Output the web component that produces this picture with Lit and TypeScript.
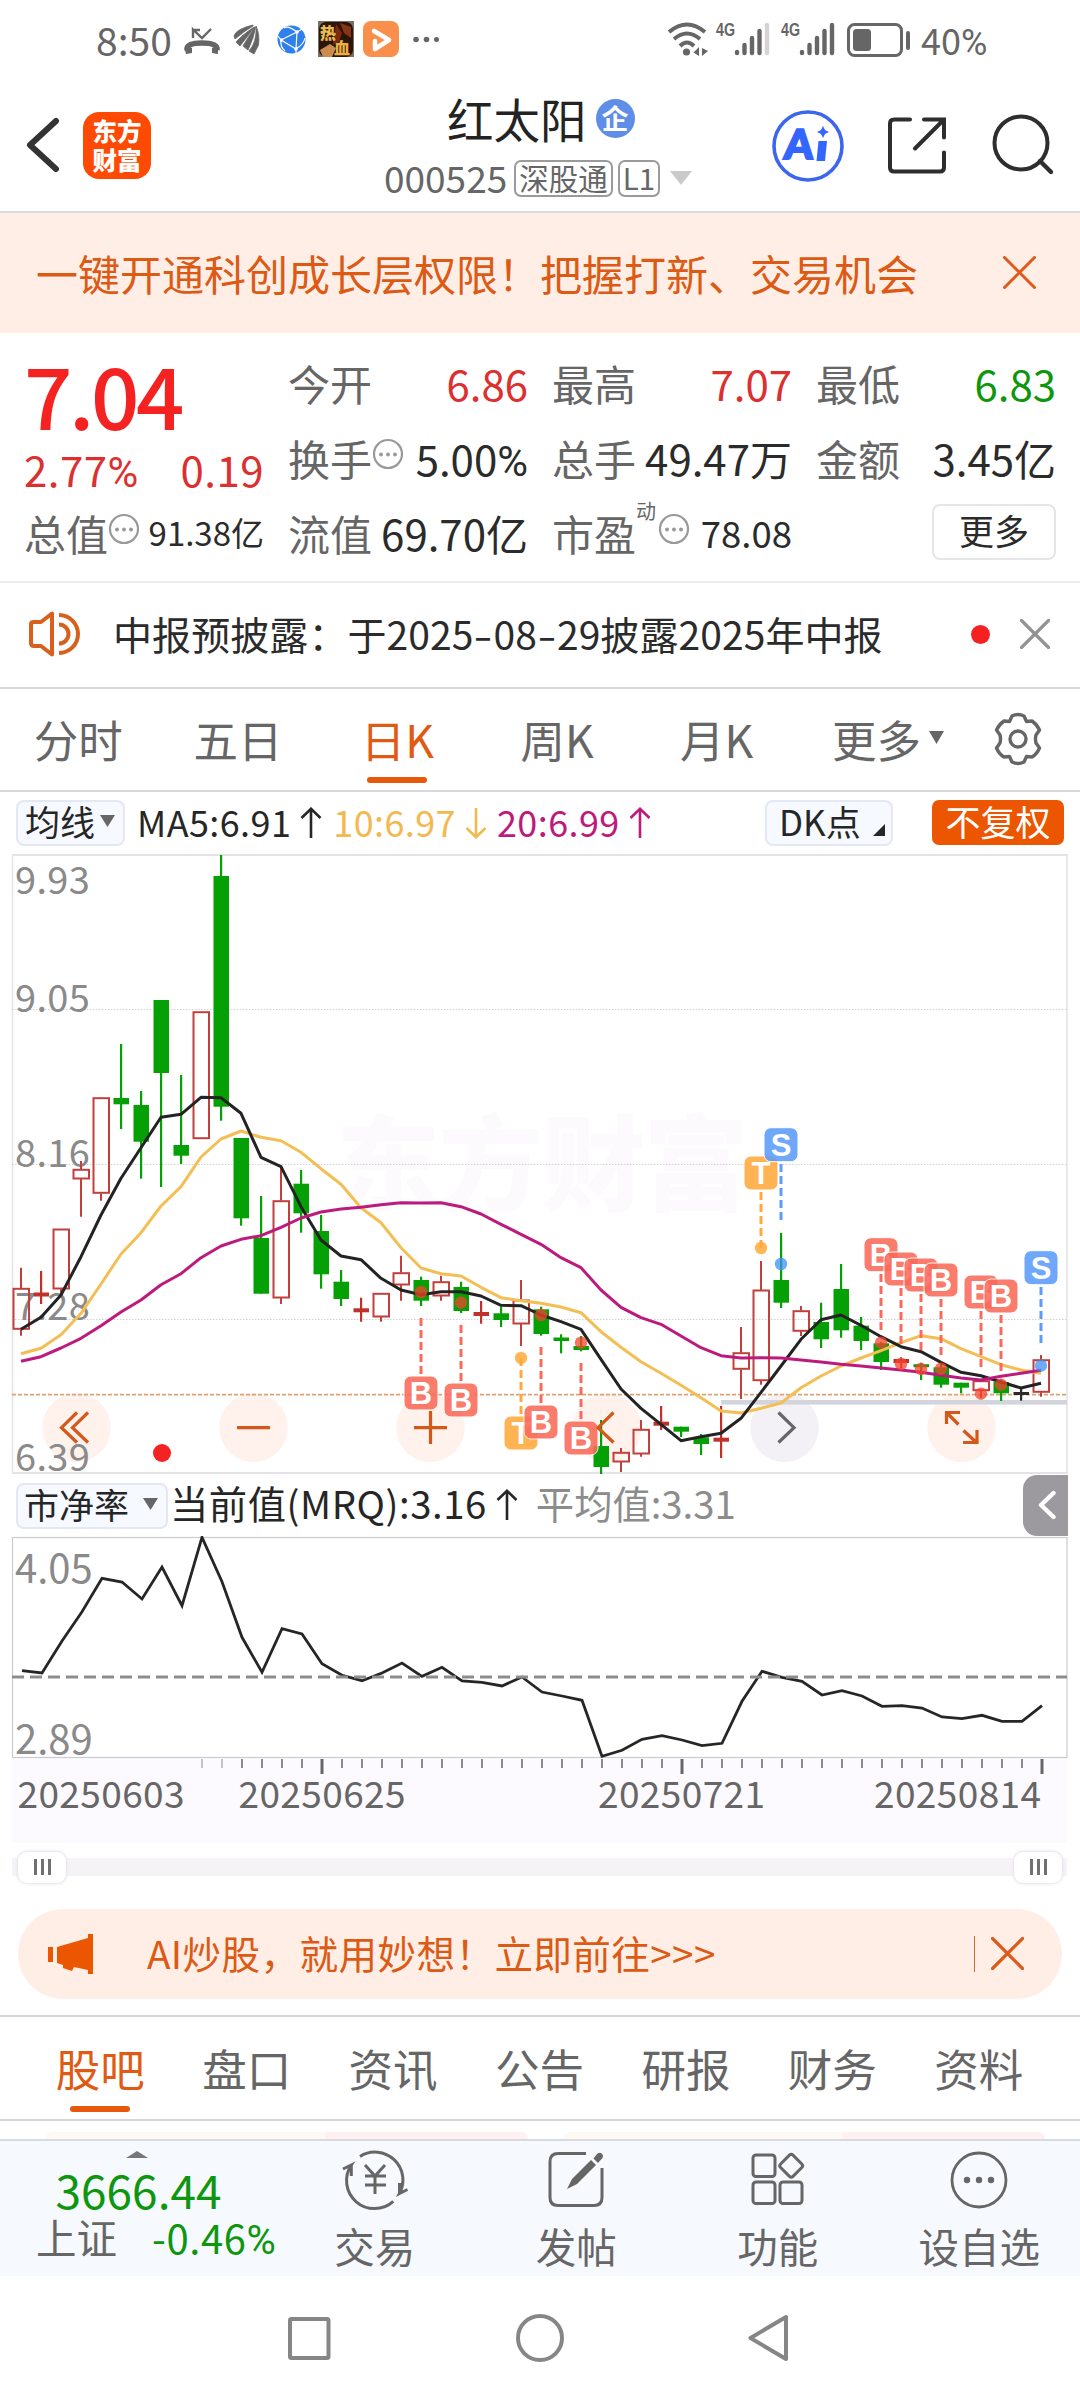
import { LitElement, html, svg, css } from "lit";
import { customElement } from "lit/decorators.js";

const FONT = css`
  :host {
    font-family: "Noto Sans CJK SC", "Noto Sans", sans-serif;
    color: #2b2b2b;
  }
  svg {
    display: block;
    flex: none;
  }
  * {
    box-sizing: border-box;
  }
`;

type Candle = [kind: string, high: number, top: number, bottom: number, low: number];

// r: hollow rise, g: solid fall, x: red doji, y: green doji, k: flat doji
const CANDLES: Candle[] = [
  ["r", 1267.7, 1288.3, 1329.3, 1335.7],
  ["x", 1271, 1292.5, 1296.5, 1304],
  ["r", 1229, 1229, 1289, 1293],
  ["r", 1161, 1169.3, 1179, 1216.7],
  ["r", 1097.7, 1097.7, 1193.3, 1200.7],
  ["g", 1044, 1098, 1104.3, 1129],
  ["g", 1091, 1105, 1141.7, 1178.7],
  ["g", 1000, 1000, 1073, 1187],
  ["g", 1075, 1145, 1155.7, 1164],
  ["r", 1011.7, 1011.7, 1138.7, 1138.7],
  ["g", 855, 876, 1106.7, 1120.7],
  ["g", 1138, 1138, 1218.3, 1225.7],
  ["g", 1196, 1238, 1293.7, 1293.7],
  ["r", 1166, 1200.7, 1298, 1304],
  ["g", 1170, 1183.7, 1213.3, 1232.7],
  ["g", 1215, 1231, 1274.3, 1288.7],
  ["g", 1270, 1281.7, 1299, 1306],
  ["x", 1297.7, 1308.3, 1312.3, 1321.7],
  ["r", 1293.3, 1293.3, 1317, 1321.7],
  ["r", 1255.7, 1272.7, 1285, 1300.7],
  ["g", 1276.7, 1280, 1300.7, 1306],
  ["r", 1275.7, 1281.7, 1296, 1300.7],
  ["g", 1281.7, 1287, 1311, 1313],
  ["x", 1301, 1312, 1316, 1323.7],
  ["g", 1306.7, 1313.3, 1320, 1327],
  ["r", 1280, 1300, 1324, 1346],
  ["g", 1306.7, 1309.3, 1334, 1335.7],
  ["y", 1334.3, 1337.5, 1341, 1353.3],
  ["y", 1336, 1346, 1350, 1351.3],
  ["g", 1420, 1446, 1467, 1474],
  ["r", 1448, 1452.3, 1462, 1472],
  ["r", 1420, 1429.3, 1454, 1456.7],
  ["x", 1406, 1421.7, 1425.7, 1430],
  ["g", 1426.7, 1426.7, 1431.7, 1437],
  ["g", 1434, 1437.3, 1444, 1455],
  ["x", 1406, 1437.7, 1441.7, 1458],
  ["r", 1327, 1352.7, 1369.3, 1399],
  ["r", 1261, 1290, 1380.7, 1384.7],
  ["g", 1233, 1280, 1302.7, 1308],
  ["r", 1306, 1310.7, 1331.3, 1336],
  ["g", 1302.7, 1322, 1339.3, 1348],
  ["g", 1264, 1289, 1330.3, 1337.7],
  ["g", 1317, 1325.7, 1341, 1350],
  ["g", 1342, 1343.3, 1362, 1370],
  ["x", 1357.3, 1359, 1363, 1368],
  ["y", 1362.7, 1364.2, 1367.2, 1380],
  ["g", 1362.7, 1367.3, 1384.7, 1387.7],
  ["g", 1382.7, 1382.7, 1387.7, 1393.3],
  ["r", 1380.7, 1380.7, 1390.7, 1398],
  ["g", 1379.3, 1382, 1393.3, 1401],
  ["k", 1387.3, 1392, 1395, 1400.7],
  ["r", 1355, 1359.7, 1392.3, 1396.7],
];

const MA5 = [748, 712, 645, 530, 405, 295, 203, 112, 103, 52, 53, 100, 232, 260, 380, 480, 528, 539, 595, 630, 644, 635, 635, 648, 676, 677, 705, 725, 748, 838, 927, 985, 1033, 1082, 1070, 1060, 1015, 937, 858, 778, 719, 705, 736, 770, 800, 815, 847, 877, 887, 906, 924, 910];
const MA10 = [821, 805, 764, 700, 612, 522, 458, 378, 320, 231, 177, 153, 172, 182, 217, 266, 313, 383, 428, 503, 564, 581, 588, 622, 653, 662, 670, 681, 698, 755, 802, 845, 880, 916, 953, 993, 999, 985, 969, 923, 888, 858, 834, 812, 788, 767, 776, 806, 830, 854, 870, 880];
const MA20 = [844, 830, 804, 775, 737, 696, 660, 614, 581, 533, 498, 478, 467, 442, 414, 396, 387, 382, 374, 368, 369, 368, 380, 402, 433, 463, 493, 533, 563, 630, 682, 713, 733, 768, 803, 827, 834, 833, 834, 840, 846, 853, 858, 864, 870, 877, 886, 894, 900, 889, 880, 871];
const PB = [632, 639, 543, 455, 355, 366, 417, 321, 437, 232, 365, 532, 637, 506, 522, 611, 646, 662, 639, 609, 649, 622, 663, 667, 678, 651, 696, 708, 721, 889, 871, 838, 827, 840, 857, 850, 724, 634, 652, 664, 705, 692, 708, 739, 737, 744, 771, 776, 766, 784, 784, 737];

const path = (values: number[], base: number, x0: number) =>
  values.map((v, i) => `${x0 + 20 * i},${(base + v / 3).toFixed(1)}`).join(" ");

// letter, slot, badge centre y, dash start, dash end, dot y
const MARKS: [string, number, number, number, number, number][] = [
  ["B", 20, 1393, 1318, 1375, 1292],
  ["B", 22, 1400, 1325, 1382, 1302.7],
  ["T", 25, 1433, 1358, 1415, 1358],
  ["B", 26, 1422, 1347, 1404, 1315],
  ["B", 28, 1438, 1363, 1420, 1342.7],
  ["T", 37, 1173, 1192, 1248, 1248],
  ["S", 38, 1144.7, 1164, 1220, 1264],
  ["B", 43, 1254.7, 1274, 1330, 1342.7],
  ["B", 44, 1269, 1288, 1344, 1364],
  ["B", 45, 1275, 1294, 1350, 1369],
  ["B", 46, 1280, 1299, 1355, 1368.7],
  ["B", 48, 1292, 1311, 1367, 1393.7],
  ["B", 49, 1296, 1315, 1371, 1384.7],
  ["S", 51, 1267.7, 1287, 1343, 1365.7],
];
const MARK_FILL: Record<string, string> = { B: "#f96a5a", T: "#ffa93c", S: "#5c9dfa" };
const DOT_FILL: Record<string, string> = { B: "#f5432c", T: "#ff9f1f", S: "#3d8ff5" };

@customElement("k-line-chart")
export class KLineChart extends LitElement {
  static styles = [
    FONT,
    css`
      :host {
        display: block;
      }
      .axis {
        font-size: 38px;
        fill: #8a8a8a;
        letter-spacing: 0.3px;
      }
      .mark {
        font: bold 31px "Liberation Sans", sans-serif;
        fill: #fff;
      }
      .water {
        font-size: 104px;
        font-weight: 900;
        fill: #fdfafe;
      }
    `,
  ];

  private candle([kind, high, top, bottom, low]: Candle, i: number) {
    const x = 21 + 20 * i;
    if (kind === "r") {
      return svg`<g stroke="#c2403c" stroke-width="2" fill="none">
        <path d="M${x} ${high}V${top}M${x} ${bottom}V${low}"/>
        <rect x=${x - 7.5} y=${top + 0.5} width="15.5" height=${bottom - top - 1}/></g>`;
    }
    const color = kind === "x" ? "#c2302c" : kind === "k" ? "#2b2b2b" : "#05a005";
    return svg`<rect x=${x - 1} y=${high} width="2.2" height=${low - high} fill=${color}/>
      <rect x=${x - 7.5} y=${top} width="15.5" height=${bottom - top} fill=${color}/>`;
  }

  private mark([letter, slot, y, from, to, dot]: (typeof MARKS)[number]) {
    const x = 21 + 20 * slot;
    return svg`
      <circle cx=${x} cy=${dot} r="6.2" fill=${DOT_FILL[letter]} opacity=".75"/>
      <path d="M${x} ${from}V${to}" stroke=${MARK_FILL[letter]} stroke-width="3" stroke-dasharray="8 4"/>
      <rect x=${x - 17} y=${y - 17} width="34" height="34" rx="7" fill=${MARK_FILL[letter]} opacity=".88" stroke="#fff" stroke-width="1"/>
      <text class="mark" x=${x} y=${y + 11} text-anchor="middle">${letter}</text>`;
  }

  render() {
    const labels: [string, number][] = [["9.93", 894], ["9.05", 1011.5], ["8.16", 1166.5], ["7.28", 1320], ["6.39", 1471]];
    const rounds: [number, string][] = [[76.5, "#fff1ec"], [253.5, "#fff1ec"], [430.5, "#fff1ec"], [607, "#fff1ec"], [784.5, "#f3f0f6"], [961.5, "#fff1ec"]];
    return html`<svg width="1080" height="622" viewBox="0 853 1080 622">
      <text class="water" x="336" y="1203" textLength="412">东方财富</text>
      <path d="M12.5 1473V855M1067 855V1473" stroke="#e4e3e6" stroke-width="1.6"/>
      <path d="M12 855H1068M12 1473H1068" stroke="#e4e3e6" stroke-width="2"/>
      <path d="M12 1009.5H1067M12 1164.5H1067M12 1319.5H1067" stroke="#d4d2d4" stroke-width="1" stroke-dasharray="1.5 1.5"/>
      ${rounds.map(([x, fill]) => svg`<circle cx=${x} cy="1427.7" r="34.3" fill=${fill}/>`)}
      <rect x="721" y="1400" width="346" height="4.6" fill="#d3d4dc"/>
      <path d="M12 1394.7H1067" stroke="#e0a173" stroke-width="1.8" stroke-dasharray="4 2"/>
      ${labels.map(([t, y]) => svg`<text class="axis" x="15" y=${y}>${t}</text>`)}
      ${CANDLES.map((c, i) => this.candle(c, i))}
      <g fill="none" stroke-width="3" stroke-linejoin="round">
        <polyline points=${path(MA10, 1080, 21)} stroke="#f3bf54"/>
        <polyline points=${path(MA5, 1080, 21)} stroke="#232323"/>
        <polyline points=${path(MA20, 1080, 21)} stroke="#bc1b7d"/>
      </g>
      ${MARKS.map((m) => this.mark(m))}
      <g fill="none" stroke="#d4581a" stroke-width="3.2">
        <path d="M77 1412.5L61.5 1427.7L77 1442.500M88 1412.5L72.500 1427.7L88 1442.5"/>
        <path d="M237 1427.7H270M414 1427.700H447M430.500 1411V1444"/>
        <path d="M613.5 1412.500L598 1427.7L613.5 1442.5"/>
        <path d="M778.500 1412.5L794 1427.7L778.5 1442.5" stroke="#666"/>
        <path d="M946.500 1424V1412.500H960M947 1413L958.500 1424.500M963.500 1430.5L977 1443M977 1430V1442.500H963"/>
      </g>
      <circle cx="162" cy="1453" r="9" fill="#f42222"/>
    </svg>`;
  }
}

@customElement("pb-chart")
export class PbChart extends LitElement {
  static styles = [
    FONT,
    css`
      :host {
        display: block;
      }
      .axis {
        font-size: 40px;
        fill: #8a8a8a;
      }
      .date {
        font-size: 37px;
        fill: #666;
        letter-spacing: 0.4px;
      }
    `,
  ];

  render() {
    const dates: [string, number][] = [["20250603", 17.5], ["20250625", 238.5], ["20250721", 598], ["20250814", 874]];
    const ticks = Array.from({ length: 43 }, (_, k) => k + 9);
    return html`<svg width="1080" height="308" viewBox="0 1536 1080 308">
      <rect x="12" y="1758" width="1055" height="85" fill="#fdfaff"/>
      <rect x="12.5" y="1537.5" width="1054.500" height="220" fill="none" stroke="#cbcbcd" stroke-width="1.200"/>
      <text class="axis" x="15" y="1583">4.05</text>
      <text class="axis" x="15" y="1754">2.89</text>
      <polyline points=${path(PB, 1460, 22)} fill="none" stroke="#262626" stroke-width="2.8"/>
      <path d="M12 1677H1067" stroke="#8d8d8d" stroke-width="2.800" stroke-dasharray="12 6"/>
      ${ticks.map((i) =>
        [15, 33, 51].includes(i)
          ? svg`<rect x=${20.5 + 20 * i} y="1759" width="3" height="15" fill="#666"/>`
          : svg`<rect x=${21 + 20 * i} y="1759" width="2" height="9" fill=${i < 11 ? "#c4c2c6" : "#8c8a8e"}/>`
      )}
      ${dates.map(([t, x]) => svg`<text class="date" x=${x} y="1808">${t}</text>`)}
    </svg>`;
  }
}

const infoIcon = () => html`<svg class="info" width="32" height="32" viewBox="0 0 32 32">
  <circle cx="16" cy="16" r="14" fill="none" stroke="#999" stroke-width="2.200"/>
  <g fill="#999"><circle cx="9" cy="16.500" r="2"/><circle cx="16" cy="16.500" r="2"/><circle cx="23" cy="16.500" r="2"/></g></svg>`;

const arrow = (up: boolean) => html`<svg class="arr" width="22" height="32" viewBox="0 0 22 32">
  <path d=${up ? "M11 31V2M1.500 11L11 1.800L20.500 11" : "M11 1V30M1.500 21L11 30.200L20.500 21"} fill="none" stroke="currentColor" stroke-width="2.600"/></svg>`;

const caret = (w: number, h: number, color: string) => html`<svg width=${w} height=${h} viewBox="0 0 10 10" preserveAspectRatio="none"><path d="M0 0H10L5 10Z" fill=${color}/></svg>`;

const cross = (size: number, color: string, w = 3) => html`<svg width=${size} height=${size} viewBox="0 0 ${size} ${size}">
  <path d="M1.500 1.500L${size - 1.5} ${size - 1.5}M${size - 1.5} 1.500L1.500 ${size - 1.5}" fill="none" stroke=${color} stroke-width=${w} stroke-linecap="round"/></svg>`;

const signal = (last: string) => html`<svg width="36" height="36" viewBox="0 0 36 36">
  <g stroke-width="4.400" stroke-linecap="round" stroke="#666">
    <path d="M3 31V32"/><path d="M10.500 24V32"/><path d="M18 17V32"/><path d="M25.500 10V32"/><path d="M33 4V32" stroke=${last}/></g></svg>`;

@customElement("app-root")
export class AppRoot extends LitElement {
  static styles = [
    FONT,
    css`
      :host {
        display: block;
        width: 1080px;
        height: 2400px;
        overflow: hidden;
        background: #fff;
      }
      .page {
        display: flex;
        flex-direction: column;
        width: 1080px;
        height: 2400px;
        white-space: nowrap;
      }
      .page > * {
        flex: none;
      }
      .pc {
        font-family: Roboto, sans-serif;
      }
      .status {
        height: 80px;
        display: flex;
        align-items: flex-start;
        padding: 21px 0 0 96px;
        color: #666;
      }
      .status .time {
        font-size: 39px;
        line-height: 36px;
        width: 87px;
      }
      .dots {
        margin-left: 14px;
      }
      .g4 {
        font: bold 19px/17px "Liberation Sans", sans-serif;
        width: 18px;
        display: flex;
        margin-left: 7px;
      }
      .g4.second {
        margin-left: 11px;
      }
      .g4 span {
        transform: scaleX(0.75);
        transform-origin: 0 0;
      }
      .wifi {
        margin-left: 228px;
      }
      .battery {
        margin-left: 12px;
      }
      .level {
        font-size: 36px;
        line-height: 37px;
        margin-left: 10px;
      }
      .header {
        height: 133px;
        display: flex;
        border-bottom: 2px solid #dcdbe0;
        padding-top: 6px;
      }
      .back {
        margin: 31px 0 0 26px;
      }
      .logo {
        margin: 26px 0 0 23px;
        width: 68px;
        height: 67px;
        border-radius: 16px;
        background: #fe4a03;
        color: #fff;
        font-size: 24.500px;
        font-weight: 900;
        line-height: 29px;
        text-align: center;
        padding-top: 4px;
      }
      .title {
        width: 310px;
        margin-left: 232px;
        flex: none;
      }
      .name {
        display: flex;
        align-items: center;
        height: 60px;
        padding: 4px 0 0 64px;
        font-size: 46.500px;
        line-height: 60px;
        color: #232323;
      }
      .badge {
        width: 39px;
        height: 39px;
        border-radius: 50%;
        margin: 1px 0 0 9px;
        background: #5f8ee8;
        color: #fff;
        font-size: 27px;
        font-weight: 700;
        line-height: 37px;
        text-align: center;
      }
      .code {
        display: flex;
        align-items: center;
        height: 38px;
        margin-top: 13px;
        padding-left: 1px;
        font-size: 37px;
        line-height: 38px;
        color: #666;
      }
      .code > span:first-child {
        padding-bottom: 2px;
      }
      .tag {
        border: 2px solid #9a9a9a;
        border-radius: 7px;
        height: 37px;
        font-size: 29.500px;
        line-height: 31px;
        padding: 0 3px;
        margin-left: 7px;
      }
      .tag + .tag {
        margin-left: 5px;
        width: 42px;
        text-align: center;
      }
      .code svg {
        margin-left: 10px;
      }
      .ai {
        margin: 24px 0 0 78px;
      }
      .share {
        margin: 30px 0 0 42px;
      }
      .search {
        margin: 28px 0 0 43px;
      }
      .banner {
        height: 120px;
        background: #ffeee6;
        color: #dc5a14;
        font-size: 42px;
        line-height: 116px;
        padding: 0 44px 1px 36px;
        display: flex;
        align-items: center;
        justify-content: space-between;
      }
      .quote {
        height: 250px;
        border-bottom: 2px solid #ececee;
        padding: 12px 24px 0;
        display: grid;
        grid-template-columns: repeat(4, 240px);
        grid-template-rows: repeat(3, 75px);
        column-gap: 24px;
        font-size: 42px;
        line-height: 75px;
      }
      .cell {
        display: flex;
        justify-content: space-between;
      }
      .cell .k {
        color: #666;
        display: flex;
      }
      .info {
        margin: 18px 0 0 0;
      }
      .k sup {
        font-size: 20px;
        line-height: 32px;
        margin-left: 0;
        height: 40px;
      }
      .k sup + .info {
        margin-left: 2px;
      }
      .price {
        grid-row: span 2;
        padding: 0;
      }
      .last {
        font-size: 85px;
        font-weight: 500;
        line-height: 96px;
        color: #f52222;
        letter-spacing: -3.4px;
      }
      .chg {
        display: flex;
        justify-content: space-between;
        line-height: 50px;
        padding-top: 3px;
        letter-spacing: 0.5px;
      }
      .red {
        color: #dc3030;
      }
      .green {
        color: #0f960f;
      }
      .s33 {
        font-size: 33px;
      }
      .s37 {
        font-size: 36.500px;
      }
      .more {
        width: 124px;
        height: 56px;
        margin: 9px 0 0 116px;
        border: 2px solid #e6e5e8;
        border-radius: 8px;
        text-align: center;
        font-size: 35px;
        line-height: 48px;
      }
      .notice {
        height: 106px;
        border-bottom: 2px solid #d8d8da;
        display: flex;
        align-items: center;
        padding: 0 30px 2px 28px;
        font-size: 39px;
        line-height: 98px;
      }
      .notice .txt {
        margin-left: 33px;
        flex: 1;
        padding-bottom: 3px;
        letter-spacing: 0.08px;
      }
      .hy {
        display: inline-block;
        width: 20px;
        text-align: center;
        transform: scaleX(1.4);
      }
      .dot {
        width: 19px;
        height: 19px;
        border-radius: 50%;
        background: #f52020;
        margin-right: 30px;
      }
      .tabs {
        height: 103px;
        border-bottom: 2px solid #d8d8da;
        display: flex;
        color: #666;
        font-size: 44.500px;
      }
      .tab {
        width: 159.600px;
        display: flex;
        flex-direction: column;
        align-items: center;
        line-height: 60px;
        padding: 20px 3px 0 0;
      }
      .tab.on,
      .stab.on {
        color: #e05a12;
      }
      .bar {
        width: 60px;
        height: 6px;
        border-radius: 3px;
        background: #e8580c;
        margin-top: 8px;
      }
      .tabmore {
        display: flex;
        line-height: 60px;
        padding-top: 20px;
        margin-left: 34px;
      }
      .tabmore svg {
        margin: 22px 0 0 8px;
      }
      .gear {
        margin: 23px 0 0 47px;
      }
      .mas {
        height: 61px;
        display: flex;
        align-items: center;
        padding: 0 16px 0 16px;
        font-size: 36px;
        line-height: 46px;
        color: #262626;
      }
      .pill {
        height: 46px;
        border: 2px solid #e3e8f2;
        border-radius: 8px;
        background: #f6f9ff;
        display: flex;
        align-items: center;
        font-size: 35px;
        line-height: 38px;
        padding-bottom: 3px;
      }
      .avg {
        width: 109px;
        padding-left: 7px;
        gap: 5px;
      }
      .ma {
        display: flex;
        align-items: center;
        gap: 9px;
        padding-bottom: 3px;
        letter-spacing: 0.4px;
        margin-left: 12px;
      }
      .arr {
        margin-top: 4px;
      }
      .yel {
        color: #f3b94f;
        margin-left: 11px;
      }
      .mag {
        color: #bc1b7d;
        margin-left: 10px;
      }
      .dk {
        width: 128px;
        margin-left: auto;
        padding-left: 12px;
      }
      .dk svg {
        margin: 17px 0 0 12px;
      }
      .noadj {
        width: 132px;
        height: 45px;
        border-radius: 7px;
        background: #ec5600;
        color: #fff;
        text-align: center;
        font-size: 35px;
        line-height: 41px;
        margin-left: 39px;
      }
      .pbrow {
        height: 61px;
        display: flex;
        align-items: center;
        padding: 0 12px 0 16px;
        font-size: 38.300px;
        line-height: 50px;
        color: #262626;
      }
      .pb {
        width: 152px;
        padding-left: 6px;
        gap: 14px;
      }
      .cur {
        margin-left: 2px;
        display: flex;
        align-items: center;
        gap: 9px;
        padding-bottom: 5px;
        letter-spacing: 0.55px;
      }
      .mean {
        color: #8c8c8c;
        margin-left: 18px;
        padding-bottom: 5px;
      }
      .fold {
        width: 45px;
        height: 61px;
        border-radius: 14px 0 0 14px;
        background: #9c9a9f;
        margin-left: auto;
        padding: 15px 0 0 15px;
      }
      .slider {
        height: 65px;
        padding: 8px 13px 0 12px;
      }
      .track {
        height: 30px;
        display: flex;
        justify-content: space-between;
        align-items: center;
        padding: 0 5px 0 6px;
        background: linear-gradient(#f6f3f7, #f6f3f7) center / 100% 18px no-repeat;
        border-radius: 9px;
      }
      .grip {
        width: 48px;
        height: 31px;
        border-radius: 9px;
        background: #fff;
        box-shadow: 0 0 3px 1px #e4e0e8;
        display: flex;
        gap: 4px;
        justify-content: center;
        align-items: center;
      }
      .grip i {
        width: 3px;
        height: 16px;
        background: #707070;
      }
      .promo {
        height: 90px;
        margin: 0 18px;
        border-radius: 45px;
        background: #ffeee6;
        color: #dc5a14;
        display: flex;
        align-items: center;
        padding: 0 38px 1px 29px;
        font-size: 38.600px;
        line-height: 84px;
      }
      .promo .txt {
        margin-left: 54px;
        flex: 1;
        padding-bottom: 4px;
        letter-spacing: 0.4px;
      }
      .sep {
        width: 1.500px;
        height: 36px;
        background: #cf6b32;
        margin-right: 16px;
      }
      .stabs {
        margin-top: 16px;
        height: 106px;
        border-top: 2px solid #d5d5da;
        border-bottom: 2px solid #d5d5da;
        padding: 0 28px 0 27px;
        display: flex;
        color: #666;
        font-size: 44.500px;
      }
      .stab {
        flex: 1;
        display: flex;
        flex-direction: column;
        align-items: center;
        line-height: 60px;
        padding-top: 21px;
      }
      .peek {
        height: 18px;
        padding: 11px 35px 0 45px;
        display: flex;
        gap: 35px;
      }
      .peek div {
        flex: 1;
        border-radius: 16px 16px 0 0;
        background: linear-gradient(90deg, #fff9f4 0 58%, #fff0f1 58%);
      }
      .actions {
        height: 137px;
        border-top: 2px solid #d8dae2;
        background: #f6f9fe;
        display: flex;
        color: #666;
        font-size: 40.500px;
      }
      .index {
        width: 274px;
        display: flex;
        flex-direction: column;
        align-items: center;
        padding-top: 10px;
      }
      .idx {
        font-size: 46px;
        line-height: 46px;
        margin-top: 8px;
        padding-left: 3px;
      }
      .idr {
        display: flex;
        line-height: 46px;
        margin-top: 2px;
        padding-left: 36px;
        gap: 35px;
        width: 100%;
      }
      .idr .green {
        font-size: 40px;
        letter-spacing: 0.6px;
      }
      .act {
        flex: 1;
        display: flex;
        flex-direction: column;
        align-items: center;
        padding-top: 9px;
      }
      .act span {
        line-height: 50px;
        margin-top: 9px;
      }
      .nav {
        height: 124px;
        display: flex;
        padding: 35px 0 0 284px;
      }
    `,
  ];

  private statusBar() {
    return html`<div class="status">
      <span class="time">8:50</span>
      <svg width="216" height="37" viewBox="183 21 216 37">
        <path d="M187 50Q186 43 202 43Q218 43 217 50" fill="none" stroke="#666" stroke-width="5.500"/>
        <path d="M185 50Q187 47 192 48V53L186 54ZM218 50Q217 47 212 48V53L218 54Z" fill="#666"/>
        <path d="M193 38V29.500L202 38L211 29M193 30H200" fill="none" stroke="#666" stroke-width="2.400"/>
        <path d="M253 25Q236 29 234 36L235 39Q243 32 253 26ZM254 27Q241 36 236 42L240 46Q248 36 254.500 27ZM255 27Q247 39 243 46L248 50Q254 38 255.500 27ZM256 26Q260 34 258.500 45L254 54L249 51Q257 42 256 26Z" fill="#666" stroke="#666" stroke-width=".8"/>
        <circle cx="291.500" cy="39.500" r="14" fill="#2f80ee"/>
        <path d="M281 40L297 32M281 40L296 49M297 32L296 49M297 32L302 29M281 40L278 36M296 49V53M297 32Q288 25 284 28M296 49Q304 44 305 38M281 40Q280 47 285 51" fill="none" stroke="#fff" stroke-width="1.200"/>
        <circle cx="281.500" cy="40" r="1.800" fill="#fff"/><circle cx="297" cy="32" r="1.800" fill="#fff"/><circle cx="296" cy="49" r="1.800" fill="#fff"/>
        <rect x="318" y="21" width="36" height="36" fill="#777169"/>
        <rect x="319" y="22" width="34" height="35" rx="7" fill="#2b1509"/>
        <path d="M320 50L330 44L336 48L332 57H323Z" fill="#c98b4e"/><path d="M336 24L342 33L339 42L333 45Z" fill="#7b2a12"/><path d="M340 23L351 27V38L344 33Z" fill="#8a3416"/>
        <text x="320" y="39" font-size="16" font-weight="900" fill="#e9bb52">热</text>
        <text x="334" y="54" font-size="16" font-weight="900" fill="#e9b045">血</text>
        <rect x="363" y="21" width="36" height="36" rx="8" fill="#f98f4a"/>
        <path d="M374 31L389 40L375 49V41" fill="none" stroke="#fff" stroke-width="4.600" stroke-linejoin="round" stroke-linecap="round"/>
      </svg>
      <svg class="dots" width="26" height="36" viewBox="0 0 26 36"><g fill="#666"><circle cx="3" cy="18.500" r="2.800"/><circle cx="13.500" cy="18.500" r="2.800"/><circle cx="23.500" cy="18.500" r="2.500"/></g></svg>
      <svg class="wifi" width="42" height="36" viewBox="0 0 42 36">
        <g fill="none" stroke="#666" stroke-width="4"><path d="M2 11Q20 -4 38 11"/><path d="M7 18Q20 7 33 18"/><path d="M13 25Q20 18 27 25"/></g>
        <circle cx="19.500" cy="31" r="3.600" fill="#666"/><path d="M32 26V35L26.500 31.500Z M35 27V35L41 30Z" fill="#666"/></svg>
      <div class="g4"><span>4G</span></div>
      ${signal("#d6d2d6")}
      <div class="g4 second"><span>4G</span></div>
      ${signal("#666")}
      <svg class="battery" width="64" height="37" viewBox="0 0 64 37">
        <rect x="1.500" y="3.500" width="53" height="31" rx="6" fill="none" stroke="#666" stroke-width="3"/>
        <rect x="6" y="8" width="18" height="22" rx="3.500" fill="#666"/><path d="M61 12V27" stroke="#666" stroke-width="4" stroke-linecap="round"/></svg>
      <span class="level">40<span class="pc">%</span></span>
    </div>`;
  }

  private header() {
    return html`<div class="header">
      <svg class="back" width="34" height="56" viewBox="0 0 34 56"><path d="M30 4L4 28L30 52" fill="none" stroke="#333" stroke-width="6" stroke-linecap="round" stroke-linejoin="round"/></svg>
      <div class="logo">东方<br />财富</div>
      <div class="title">
        <div class="name">红太阳<span class="badge">企</span></div>
        <div class="code"><span>000525</span><span class="tag">深股通</span><span class="tag">L1</span>${caret(22, 14, "#cacaca")}</div>
      </div>
      <svg class="ai" width="74" height="74" viewBox="0 0 74 74">
        <circle cx="37" cy="36" r="34" fill="none" stroke="#3c66ee" stroke-width="3.600"/>
        <text x="13" y="49.500" font-size="41" font-weight="900" fill="#3565ff" stroke="#3565ff" stroke-width="2" font-family="Lato" transform="skewX(-4) translate(3 0)">A</text>
        <path d="M47.500 31H56L54 51H45.500Z" fill="#3565ff"/>
        <path d="M52 16L54 20L58 22L54 24L52 28L50 24L46 22L50 20Z" fill="#3565ff"/></svg>
      <svg class="share" width="62" height="62" viewBox="0 0 62 62">
        <path d="M24 4H8Q4 4 4 8V52Q4 56 8 56H54Q58 56 58 52V37M38 4H58V22M57 5L29 33" fill="none" stroke="#2e2e2e" stroke-width="4" stroke-linecap="round" transform="translate(-1 -0.500)"/></svg>
      <svg class="search" width="64" height="66" viewBox="0 0 64 66"><circle cx="29" cy="29" r="26.500" fill="none" stroke="#2e2e2e" stroke-width="4"/><path d="M48 47L59 58" stroke="#2e2e2e" stroke-width="4.400" stroke-linecap="round"/></svg>
    </div>`;
  }

  private quote() {
    return html`<div class="quote">
      <div class="price">
        <div class="last">7.04</div>
        <div class="chg red"><span>2.77<span class="pc">%</span></span><span>0.19</span></div>
      </div>
      <div class="cell"><span class="k">今开</span><span class="red">6.86</span></div>
      <div class="cell"><span class="k">最高</span><span class="red">7.07</span></div>
      <div class="cell"><span class="k">最低</span><span class="green">6.83</span></div>
      <div class="cell"><span class="k">换手${infoIcon()}</span><span>5.00<span class="pc">%</span></span></div>
      <div class="cell"><span class="k">总手</span><span>49.47万</span></div>
      <div class="cell"><span class="k">金额</span><span>3.45亿</span></div>
      <div class="cell"><span class="k">总值${infoIcon()}</span><span class="s33">91.38亿</span></div>
      <div class="cell"><span class="k">流值</span><span>69.70亿</span></div>
      <div class="cell"><span class="k">市盈<sup>动</sup>${infoIcon()}</span><span class="s37">78.08</span></div>
      <div class="more">更多</div>
    </div>`;
  }

  render() {
    const hy = html`<span class="hy">-</span>`;
    return html`<div class="page">
      ${this.statusBar()} ${this.header()}
      <div class="banner"><span>一键开通科创成长层权限！把握打新、交易机会</span>${cross(33, "#e0591a", 3)}</div>
      ${this.quote()}
      <div class="notice">
        <svg width="52" height="46" viewBox="0 0 52 46"><g fill="none" stroke="#d8601c" stroke-width="4" stroke-linejoin="round">
          <path d="M3 13Q3 11 6 11H13L24 2.500V43.500L13 35H6Q3 35 3 32Z"/><path d="M31 13.500A9.500 9.500 0 0 1 31 32.500M31 4A19 19 0 0 1 31 42"/></g></svg>
        <span class="txt">中报预披露：于2025${hy}08${hy}29披露2025年中报</span>
        <i class="dot"></i>${cross(30, "#939393", 3.2)}
      </div>
      <div class="tabs">
        ${["分时", "五日", "日K", "周K", "月K"].map((t, i) => html`<div class="tab ${i === 2 ? "on" : ""}">${t}${i === 2 ? html`<i class="bar"></i>` : ""}</div>`)}
        <div class="tabmore">更多${caret(15, 13, "#666")}</div>
        <svg class="gear" width="54" height="54" viewBox="0 0 54 54"><g fill="none" stroke="#666" stroke-width="3.400" stroke-linejoin="round">
          <path d="M21 4Q27 1 33 4L35.500 9.500L41 9Q46 12.500 48.500 18L45 23Q44 27 45 31L48.500 36Q46 42 41 45L35.500 44.500L33 50Q27 53 21 50L18.500 44.500L13 45Q8 42 5.500 36L9 31Q10 27 9 23L5.500 18Q8 12.500 13 9L18.500 9.500Z"/><circle cx="27" cy="27" r="8"/></g></svg>
      </div>
      <div class="mas">
        <div class="pill avg">均线${caret(15, 12, "#666")}</div>
        <div class="ma"><span>MA5:6.91</span>${arrow(true)}</div>
        <div class="ma yel"><span>10:6.97</span>${arrow(false)}</div>
        <div class="ma mag"><span>20:6.99</span>${arrow(true)}</div>
        <div class="pill dk">DK点<svg width="12" height="12" viewBox="0 0 12 12"><path d="M12 0V12H0Z" fill="#262626"/></svg></div>
        <div class="noadj">不复权</div>
      </div>
      <k-line-chart></k-line-chart>
      <div class="pbrow">
        <div class="pill pb">市净率${caret(15, 12, "#666")}</div>
        <div class="cur"><span>当前值(MRQ):3.16</span>${arrow(true)}</div>
        <div class="mean">平均值:3.31</div>
        <div class="fold"><svg width="18" height="30" viewBox="0 0 18 30"><path d="M15.500 3L3 15L15.500 27" fill="none" stroke="#fff" stroke-width="4.400" stroke-linecap="round" stroke-linejoin="round"/></svg></div>
      </div>
      <pb-chart></pb-chart>
      <div class="slider"><div class="track">
        <div class="grip"><i></i><i></i><i></i></div>
        <div class="grip"><i></i><i></i><i></i></div>
      </div></div>
      <div class="promo">
        <svg width="46" height="40" viewBox="0 0 46 40"><path d="M1 13H6V28H1ZM10 13L41 4V0H46V40H41V36L27 33L25 37L16 34V31L10 29Z" fill="#ec5600"/></svg>
        <span class="txt">AI炒股，就用妙想！立即前往&gt;&gt;&gt;</span>
        <i class="sep"></i>${cross(33, "#dc5a1a", 3.2)}
      </div>
      <div class="stabs">
        ${["股吧", "盘口", "资讯", "公告", "研报", "财务", "资料"].map((t, i) => html`<div class="stab ${i === 0 ? "on" : ""}">${t}${i === 0 ? html`<i class="bar"></i>` : ""}</div>`)}
      </div>
      <div class="peek"><div></div><div></div></div>
      <div class="actions">
        <div class="index">
          <svg width="22" height="7" viewBox="0 0 22 7"><path d="M0 7L11 0L22 7Z" fill="#777"/></svg>
          <div class="idx green">3666.44</div>
          <div class="idr"><span>上证</span><span class="green">-0.46<span class="pc">%</span></span></div>
        </div>
        <div class="act"><svg width="68" height="62" viewBox="0 0 68 62"><g fill="none" stroke="#666" stroke-width="3">
          <path d="M19 6.400A28 28 0 0 1 58.500 43.500L66.500 39.500M58.500 43.500V33"/><path d="M52.300 51.400A28 28 0 0 1 10.300 15L2 19M10.300 15V26"/><path d="M24 15L34 26L44 15M34 25V44M24 26H45M24 35H45"/></g></svg><span>交易</span></div>
        <div class="act"><svg width="62" height="62" viewBox="0 0 62 62"><path d="M41 3.500H13Q5 3.500 5 11.500V47.500Q5 55.500 13 55.500H49Q57 55.500 57 47.500V18" fill="none" stroke="#666" stroke-width="3"/>
          <path d="M22 39L27 29L46 10L51 15L32 34Z" fill="#666"/><path d="M48.500 8.500L52 4Q55 1.500 57 4Q59 6 57 8.500L53 13Z" fill="#666"/></svg><span>发帖</span></div>
        <div class="act"><svg width="62" height="62" viewBox="0 0 62 62"><g fill="none" stroke="#666" stroke-width="3"><rect x="6" y="5" width="22" height="21.500" rx="3"/><rect x="6" y="32" width="22" height="21.500" rx="3"/><rect x="33" y="32" width="22" height="21.500" rx="3"/>
          <rect x="35.500" y="7" width="17.500" height="17.500" rx="2.500" transform="rotate(45 44.200 15.700)"/></g></svg><span>功能</span></div>
        <div class="act"><svg width="62" height="62" viewBox="0 0 62 62"><circle cx="31" cy="30" r="27" fill="none" stroke="#666" stroke-width="2.800"/><g fill="#666"><circle cx="19" cy="30" r="3.200"/><circle cx="31" cy="30" r="3.200"/><circle cx="43" cy="30" r="3.200"/></g></svg><span>设自选</span></div>
      </div>
      <div class="nav">
        <svg width="510" height="54" viewBox="284 2311 510 54"><g fill="none" stroke="#868686" stroke-width="4" stroke-linejoin="round">
          <rect x="290" y="2319" width="38.500" height="39" rx="1.500"/><circle cx="540" cy="2338" r="22"/><path d="M750.500 2338L786 2317V2359Z"/></g></svg>
      </div>
    </div>`;
  }
}
